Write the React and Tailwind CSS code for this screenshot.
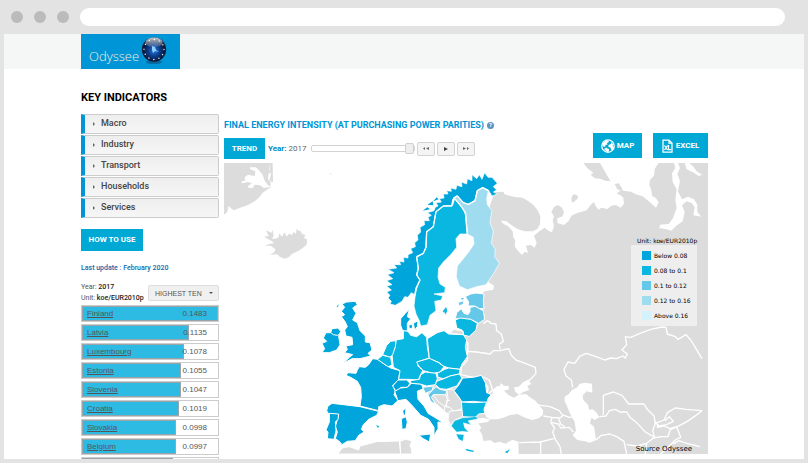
const menu = ["Macro", "Industry", "Transport", "Households", "Services"];

const ranking = [
  { name: "Finland", value: "0.1483", bar: 100 },
  { name: "Latvia", value: "0.1135", bar: 79 },
  { name: "Luxembourg", value: "0.1078", bar: 75 },
  { name: "Estonia", value: "0.1055", bar: 73 },
  { name: "Slovenia", value: "0.1047", bar: 73 },
  { name: "Croatia", value: "0.1019", bar: 71 },
  { name: "Slovakia", value: "0.0998", bar: 69 },
  { name: "Belgium", value: "0.0997", bar: 69 },
  { name: "", value: "", bar: 67 },
];

const legend = [
  { label: "Below 0.08", color: "bg-[#00a6db]" },
  { label: "0.08 to 0.1", color: "bg-[#0ab7e0]" },
  { label: "0.1 to 0.12", color: "bg-[#66c8e8]" },
  { label: "0.12 to 0.16", color: "bg-[#9fdcef]" },
  { label: "Above 0.16", color: "bg-[#d3f2fc]" },
];

const Logo = () => (
  <a
    href="#home"
    className="flex h-[35px] w-[99px] items-center bg-[#0095d6] pl-2"
  >
    <span className="mt-2 font-['Open_Sans',sans-serif] text-[13px] leading-4 font-light text-[#f1ecdc]">
      Odyssee
    </span>
    <svg viewBox="0 0 28 32" className="mb-1 ml-px h-8 w-7" aria-hidden="true">
      <defs>
        <radialGradient id="globe" cx="50%" cy="55%" r="52%">
          <stop offset="0" stopColor="#2a7be0" />
          <stop offset="0.45" stopColor="#0b3c8c" />
          <stop offset="0.85" stopColor="#081838" />
          <stop offset="1" stopColor="#26304a" />
        </radialGradient>
        <linearGradient id="shine" x1="0" y1="0" x2="0" y2="1">
          <stop offset="0" stopColor="#fff" stopOpacity="0.75" />
          <stop offset="1" stopColor="#fff" stopOpacity="0.1" />
        </linearGradient>
      </defs>
      <ellipse cx="14" cy="28" rx="8" ry="2" fill="#04699f" />
      <circle cx="14" cy="15.500" r="12.200" fill="url(#globe)" />
      <ellipse cx="14" cy="8.500" rx="8.500" ry="5" fill="url(#shine)" />
      <path d="M12 12l3 1 1 3 3 2-4-1-2 2-1-3z" fill="#8fd0ff" />
      <circle
        cx="14"
        cy="15.500"
        r="10"
        fill="none"
        stroke="#fff"
        strokeWidth="1.300"
        strokeLinecap="round"
        strokeDasharray="0.1 5.130"
      />
    </svg>
  </a>
);

const GlobeIcon = () => (
  <svg viewBox="0 0 28 28" className="size-[14px]" aria-hidden="true">
    <circle cx="14" cy="14" r="12.500" fill="#00a8d6" stroke="#fff" strokeWidth="2.500" />
    <path
      d="M3 9l6-5 5-1 2 3-4 2 1 3-4 1-1 4-5-2zM15 12l5-2 0-4 5 5-2 3 3 2-3 6-3-1-1-4-4-1zM6 20l4-3 3 2 3 1 0 5-4 1z"
      fill="#fff"
    />
  </svg>
);

const ExcelIcon = () => (
  <svg viewBox="0 0 22 28" className="h-[14px] w-[11px]" aria-hidden="true">
    <path
      d="M2 2h12l6 6v18H2zM14 2v6h6"
      fill="none"
      stroke="#fff"
      strokeWidth="2.500"
    />
    <path
      d="M5 13l6 9M11 13l-6 9M13 12v9h5"
      fill="none"
      stroke="#fff"
      strokeWidth="2.500"
    />
  </svg>
);

const EuropeMap = () => (
  <svg
    viewBox="0 0 1452 873"
    className="block h-auto w-full"
    role="img"
    aria-label="Final energy intensity by country"
  >
    {/* Greenland and Iceland */}
    <g transform="translate(-12 -9)" fill="#dcdcdc">
      <path d="M12 9H148L147 28 152 40 150 64 159 66 158 9 148 9 152 82 140 90 128 98 118 112 104 124 84 135 60 143 42 151 34 146 26 137 22 156 12 164Z" />
      <path
        d="M90 22L108 22 118 32 128 44 134 62 144 76 154 80 132 84 120 76 104 74 98 84 86 84 84 78 96 70 84 66 66 70 64 64 76 62 74 52 84 44 104 48 106 34 90 28ZM146 40L152 42 148 64 144 56Z"
        fill="#fff"
      />
      <path d="M132 230L146 228 138 211 154 218 158 210 161 228 156 236 166 236 176 232 178 220 186 230 194 217 200 230 208 220 214 226 222 216 228 222 230 206 238 214 242 212 246 222 256 224 252 234 261 238 260 254 248 264 236 272 216 282 206 292 194 296 180 291 172 283 150 284 163 276 166 267 152 257 134 258 150 251 162 250 156 244Z" />
      <circle cx="332" cy="42" r="2" />
    </g>

    {/* Mainland, Russia and the Middle East */}
    <path
      d="M812 88L838 86 842 94 856 98 872 102 896 104 912 114 926 124 940 140 949 160 948 184 940 198 926 205 902 205 880 198 862 186 846 174 830 173 838 182 852 190 866 204 868 224 874 232 872 250 880 262 894 276 902 266 912 270 906 248 920 246 932 254 938 240 930 218 944 206 962 194 974 204 984 208 990 190 986 172 990 160 982 146 990 132 1002 126 1014 134 1020 148 1016 160 1000 166 1000 180 1020 186 1034 174 1042 158 1060 150 1088 142 1098 128 1110 116 1114 128 1124 140 1132 134 1150 138 1162 128 1176 126 1190 134 1200 122 1198 104 1188 96 1178 92 1190 82 1220 86 1236 94 1256 100 1276 116 1296 134 1304 118 1296 106 1284 98 1282 82 1276 66 1278 50 1290 38 1292 18 1304 0H1452V873H884L883 836 866 830 854 836 846 842 826 836 812 840 800 832 778 834 774 814 766 802 772 794 760 778 790 772 756 764 762 752 740 756 690 790 674 778 674 756 658 740 626 712 612 690 616 674 640 640 700 600 700 530 676 512 690 500 712 502 760 490 780 430 776 392 788 364 800 250 790 150Z"
      fill="#dcdcdc"
    />
    <path d="M784 366L792 356 810 368 808 380 786 384 770 390 736 388 744 376Z" fill="#fff" />
    <g transform="translate(948 -9)" fill="#dcdcdc">
      <path d="M130 9H180L192 30 206 54 212 64 196 62 180 56 164 55 152 44 160 38 144 26Z" />
      <path d="M224 72L236 70 246 84 248 94 232 88Z" />
      <path d="M94 114L100 103 112 106 114 114 104 124 96 128Z" />
      <path
        d="M402 9L406 24 396 40 398 66 410 88 406 120 410 144 398 176 386 192 360 194 358 204 380 208 394 212 408 198 428 184 434 156 426 136 440 124 456 130 464 142 460 166 484 170 472 156 472 134 462 118 444 110 426 118 414 94 420 62 412 42 420 24 414 9ZM434 9L440 28 462 38 476 48 486 44 470 34 460 20 448 9Z"
        fill="#fff"
      />
    </g>

    {/* Inland seas and borders in the east */}
    <g transform="translate(648 351)">
      <g fill="#fff">
        <path d="M134 384L144 366 148 350 158 342 158 330 172 318 180 318 182 309 192 317 206 318 207 328 192 332 206 346 222 353 236 344 258 342 270 352 286 362 298 376 310 392 308 405 296 415 276 420 252 412 232 402 210 405 190 413 172 418 150 418 140 412 133 400Z" />
        <path d="M222 322L236 320 250 306 276 294 268 304 274 312 262 318 268 330 250 336 238 344 226 336Z" />
        <path d="M396 330L412 322 418 312 434 308 456 311 457 338 440 334 428 346 430 360 444 374 448 390 458 388 470 398 478 412 464 420 454 414 450 430 462 440 465 458 468 480 450 488 434 484 412 480 398 466 408 452 404 426 396 412 388 396 382 380 374 364 374 350 386 342Z" />
        <path d="M110 416L130 414 150 418 144 426 118 430 106 436Z" />
      </g>
      <g fill="none" stroke="#fff" strokeWidth="4" strokeLinejoin="round">
        <path d="M130 130L142 122 154 130 168 132 170 152 184 162 190 184 178 192 180 208" />
        <path d="M80 214L110 216 150 222 160 212 180 212 206 206 214 226 228 240 250 248 286 262 288 280 272 298" />
        <path d="M76 178L84 190 82 240 64 262 62 284 100 292 122 288 148 300 158 330 148 340M122 288L132 304 144 322 142 340" />
        <path d="M286 374L330 380 358 392 366 404 388 412 400 410M310 408L336 412 360 414 370 406M336 412L332 428 344 444 338 456 346 478 360 500 364 522M336 428L356 432 362 444 388 442 400 456M356 416L362 432 374 440" />
        <path d="M236 488L300 486 342 476M302 486L302 522" />
        <path d="M398 322L394 300 378 288 372 268 384 246 404 250 420 228 440 220 474 232 494 240 512 234 530 236 548 228 556 234 562 222 546 210 560 194 556 170 572 172 600 160 632 148 666 141 678 142 682 162 706 170 714 178 738 164 752 180 768 206 786 236" />
        <path d="M478 410L498 408 508 392 526 388 540 396 560 396 570 412 590 428 616 456 640 470M490 404V346L520 336 546 346 566 372 612 372 622 388 642 408 646 430 672 420 682 398 706 384 738 388 786 392" />
        <path d="M468 480L484 466 510 462 530 470 552 484 560 522M616 522L620 490 640 474 664 470 684 470 690 450 712 440 742 424 768 406 786 392M644 424L656 438 680 434 700 424 688 410 674 422M646 430L638 452 644 474M654 432L652 442 672 438 690 446 710 440 722 472 706 480 690 496 662 522M700 492L716 482 740 490 780 500" />
        <path d="M560 494L590 498 620 490" />
      </g>
    </g>

    {/* Nordic and Baltic countries */}
    <g transform="translate(468 -9)" stroke="#fff" strokeWidth="2" strokeLinejoin="round">
      <path
        d="M30 432L34 424 24 414 30 406 20 396 34 390 20 378 36 374 20 362 38 356 22 344 42 338 24 328 50 324 42 314 62 314 58 304 72 306 70 292 84 294 84 284 98 278 92 266 106 260 104 248 114 240 112 226 122 216 120 202 134 194 132 182 148 182 144 172 154 166 142 158 162 152 166 142 174 138 168 128 184 126 178 116 192 114 190 102 204 102 200 92 214 94 212 84 228 88 230 76 246 80 244 66 260 72 262 56 276 62 276 44 290 56 298 44 306 58 314 38 324 52 336 52 352 70 340 80 350 90 340 96 352 102 336 108 325 90 308 83 292 92 285 122 265 133 250 128 230 108 218 118 215 138 190 138 168 155 160 200 140 215 138 262 130 280 110 290 115 325 110 345 120 360 108 385 104 404 94 398 84 412 74 410 66 424 46 436Z"
        fill="#00a6db"
      />
      <path
        d="M218 136L224 116 244 140 256 158 262 222 240 222 228 236 230 262 212 284 190 306 176 324 174 352 180 372 196 382 194 398 162 402 188 408 184 420 164 424 168 452 150 466 142 494 122 498 118 482 108 462 102 438 106 404 110 386 120 360 110 345 115 325 110 292 130 280 138 262 140 215 160 200 168 155 190 138Z"
        fill="#0ab7e0"
      />
      <path
        d="M222 113L232 108 250 128 265 133 285 122 292 92 308 83 325 92 320 116 322 134 336 152 330 188 340 214 334 250 346 268 344 290 358 310 340 342 318 374 290 380 262 389 238 378 229 350 232 318 250 296 266 276 282 252 280 232 262 222 258 165 248 145Z"
        fill="#9fdcef"
      />
      <path
        d="M110 290L115 325 110 345 120 360 108 385 104 408M110 290L130 280 138 262 140 215 160 200 168 155 190 138 215 138 222 113 244 140 256 158 262 222M224 112L232 108 250 128 265 133 285 122 292 92 308 83 325 92"
        fill="none"
        strokeWidth="4"
      />
      <path d="M128 152L142 142 150 148ZM142 134L158 124 160 136ZM160 124L170 112 176 118Z" fill="#00a6db" stroke="none" />
      <path d="M192 452L198 440 202 452 196 464Z" fill="#0ab7e0" stroke="none" />
    </g>
    <g transform="translate(648 351)" stroke="#fff" strokeWidth="3" strokeLinejoin="round">
      <path d="M76 50L92 42 108 39 132 42 130 62 132 86 118 86 104 78 84 78 86 66Z" fill="#66c8e8" />
      <path d="M56 68L70 64 68 72 58 76ZM62 54L72 54 68 60Z" fill="#66c8e8" stroke="none" />
      <path d="M46 116L50 98 64 86 72 100 84 104 90 94 90 82 106 79 118 86 130 92 134 118 116 130 92 118Z" fill="#66c8e8" />
      <path d="M46 120L60 114 92 118 112 130 108 150 88 169 72 166 66 150 50 144Z" fill="#0ab7e0" />
    </g>

    {/* Western, central and southern Europe */}
    <g transform="translate(258 411)" stroke="#fff" strokeWidth="3" strokeLinejoin="round">
      <g fill="#dcdcdc">
        <path d="M84 462L96 444 118 440 146 450 150 438 200 425 268 423 272 462Z" />
        <path d="M272 462L270 424 286 418 306 422 300 436 304 446 306 462Z" />
        <path d="M368 284L406 282 412 298 406 320 386 306Z" />
        <path d="M410 268L432 270 440 286 454 300 456 326 432 334 418 322 408 318 414 296Z" />
        <path d="M404 320L420 322 430 334 418 344 402 334Z" />
        <path d="M418 334L456 330 460 348 432 362 422 376 414 360Z" />
      </g>
      <g fill="#00a6db">
        <path d="M94 50L104 44 94 34 104 22 96 12 110 6 136 4 142 14 128 24 138 40 128 60 142 68 150 92 166 108 166 126 180 128 186 150 174 160 182 168 150 176 126 176 100 190 118 172 128 164 104 158 112 148 108 138 128 134 126 112 108 108 104 90 112 80 106 66Z" />
        <path d="M36 158L44 146 36 130 50 124 40 114 48 98 62 98 66 86 84 84 92 94 86 108 90 134 80 150 58 158Z" />
        <path d="M188 176L204 178 222 192 242 204 270 212 266 238 248 256 256 274 252 284 264 302 246 318 222 314 206 320 206 332 150 318 154 290 152 262 142 244 122 232 108 226 114 218 138 220 142 210 148 200 166 202 176 194Z" />
        <path d="M50 332L54 318 66 310 100 314 150 320 206 334 200 346 176 358 160 374 154 388 162 396 146 406 136 422 112 424 96 434 88 424 76 416 82 396 76 380 86 344 56 342Z" />
        <path d="M58 340L86 342 84 358 76 366 78 392 72 418 52 416 54 396 48 390 58 366Z" />
        <path d="M248 258L264 240 290 240 300 250 292 262 274 262 258 274Z" />
        <path d="M254 274L272 264 292 262 304 250 334 252 340 266 322 274 324 298 342 318 354 340 374 352 400 368 384 366 384 386 372 408 372 382 356 358 332 346 304 314 288 298 264 302Z" />
        <path d="M326 406L362 402 358 426 340 416ZM274 356L288 350 292 366 288 386 276 388ZM278 332L288 324 286 346 280 344Z" />
        <path d="M432 272L446 256 458 234 490 232 514 226 526 248 530 278 544 284 536 292 530 308 490 304 456 306 446 290Z" />
        <path d="M272 56L286 40 298 28 292 50 302 56 292 70 292 94 278 92 272 76Z" />
        <path d="M296 76L306 72 308 84 298 86ZM310 70L324 62 322 80 314 90Z" />
      </g>
      <g fill="#0ab7e0">
        <path d="M280 92L294 94 302 106 320 110 336 98 350 112 352 140 358 174 322 186 324 198 338 212 328 232 326 240 296 238 266 238 270 212 250 202 246 164 256 140 258 120 280 116Z" />
        <path d="M352 116L382 98 402 92 416 102 460 104 470 120 466 142 472 170 456 192 450 208 416 204 400 198 388 188 358 176Z" />
        <path d="M218 164L230 136 242 124 258 122 256 140 248 164 240 172Z" />
        <path d="M202 178L218 166 242 172 246 196 234 200Z" />
        <path d="M320 186L358 175 386 188 402 200 390 216 370 220 340 212 326 198Z" />
        <path d="M300 242L328 238 332 224 346 216 378 220 382 236 376 254 350 258 330 252 304 250Z" />
        <path d="M382 220L404 208 416 204 450 208 448 222 420 228 400 236 384 232Z" />
        <path d="M380 244L402 236 420 228 448 222 456 234 440 258 410 268 390 266 376 254Z" />
        <path d="M454 306L490 308 530 306 522 328 524 340 506 342 496 352 458 350 456 328Z" />
        <path
          d="M424 378L434 362 458 354 498 350 504 356 474 362 482 374 460 368 464 384 476 396 458 394 440 396ZM438 402L462 404 458 424 446 418Z"
          strokeWidth="1"
        />
        <path d="M466 446L492 452 490 456 470 452ZM584 456L600 448 592 460Z" stroke="none" />
      </g>
      <g fill="#66c8e8">
        <path d="M338 262L370 258 366 272 346 280Z" />
        <path d="M366 272L378 260 390 268 410 272 408 284 370 284 364 292 378 314 362 304 354 284Z" />
      </g>
      <path d="M198 376L208 378 204 384ZM398 34L406 24 402 38ZM80 20L86 12 84 22Z" fill="#0ab7e0" stroke="none" />
      <path d="M62 98L70 104 82 106 92 100M408 304L420 300" fill="none" />
      <path d="M420 100L432 88 460 94 460 104Z" fill="#dcdcdc" />
    </g>
  </svg>
);

const Legend = () => (
  <div className="absolute top-[73px] right-[11px] w-[66px] font-['DejaVu_Sans',sans-serif] text-[6px] text-black">
    <p className="pl-[6px] leading-[9px] whitespace-nowrap">
      Unit: koe/EUR2010p
    </p>
    <ul className="bg-[#eeeeee] py-[3px] pl-[11px]">
      {legend.map((item) => (
        <li key={item.label} className="flex h-[15px] items-center gap-[3px] whitespace-nowrap">
          <span className={`size-[9px] shrink-0 ${item.color}`} />
          {item.label}
        </li>
      ))}
    </ul>
  </div>
);

const Sidebar = () => (
  <aside className="w-[138px] shrink-0">
    <h1 className="text-[11px] leading-4 font-bold text-black">
      KEY INDICATORS
    </h1>
    <nav className="mt-2 flex flex-col gap-px">
      {menu.map((label) => (
        <button
          key={label}
          type="button"
          className="flex h-5 items-center gap-[6px] rounded-r-[2px] border border-l-4 border-[#cccccc] border-l-[#0095d6] bg-gradient-to-b from-[#eeeeee] to-[#f6f6f6] pl-2 text-[9px] font-medium text-[#444444]"
        >
          <span className="border-y-2 border-l-2 border-y-transparent border-l-[#666666]" />
          {label}
        </button>
      ))}
    </nav>
    <button
      type="button"
      className="mt-[11px] block h-[22px] w-[62px] bg-[#00a8d6] text-[8px] font-bold text-white"
    >
      HOW TO USE
    </button>
    <p className="mt-[11px] text-[7px] leading-3 font-medium text-[#1468a8]">
      Last update : February 2020
    </p>
    <div className="mt-2 flex items-center justify-between text-[7px] leading-[11px] text-[#555555]">
      <p className="whitespace-nowrap">
        Year: <b className="font-medium text-[#222222]">2017</b>
        <br />
        Unit: <b className="font-medium text-[#222222]">koe/EUR2010p</b>
      </p>
      <div className="relative">
        <select
          aria-label="Ranking"
          className="block h-4 w-[71px] appearance-none rounded-[2px] border border-[#dddddd] bg-[#f0f0f0] pl-[6px] font-['Liberation_Sans',sans-serif] text-[7px] text-[#555555]"
        >
          <option>HIGHEST TEN</option>
        </select>
        <span className="pointer-events-none absolute top-[7px] right-[6px] border-x-2 border-t-2 border-x-transparent border-t-[#555555]" />
      </div>
    </div>
    <ul className="mt-px flex flex-col gap-[2px] font-['Liberation_Sans',sans-serif] text-[8px] text-[#555555]">
      {ranking.map((row) => (
        <li
          key={row.bar + row.name}
          className="relative h-[17px] border border-[#cccccc]"
        >
          <div
            className="h-full border border-[#9aa5ab] bg-[#2ebbe3]"
            style={{ width: `${row.bar}%` }}
          />
          <div className="absolute inset-0 flex items-center justify-between pr-[11px] pl-[5px]">
            <a href="#country" className="underline">
              {row.name}
            </a>
            <span>{row.value}</span>
          </div>
        </li>
      ))}
    </ul>
  </aside>
);

const playerButton =
  "flex h-[14px] w-[18px] items-center justify-center rounded-[2px] border border-[#d3d3d3] bg-[#f4f4f4]";

const Player = () => (
  <div className="flex h-[21px] items-center">
    <button
      type="button"
      className="h-[21px] w-[41px] bg-[#00a8d6] text-[8px] font-bold text-white"
    >
      TREND
    </button>
    <label htmlFor="year" className="ml-[3px] text-[8px] whitespace-nowrap text-[#666666]">
      <b className="text-[#0088c2]">Year:</b> 2017
    </label>
    <input
      id="year"
      type="range"
      min="2000"
      max="2017"
      defaultValue="2017"
      className="ml-[5px] h-[7px] w-[104px] appearance-none rounded-[2px] border border-[#d3d3d3] bg-white [&::-webkit-slider-thumb]:h-[11px] [&::-webkit-slider-thumb]:w-[9px] [&::-webkit-slider-thumb]:appearance-none [&::-webkit-slider-thumb]:rounded-[2px] [&::-webkit-slider-thumb]:border [&::-webkit-slider-thumb]:border-[#d0d0d0] [&::-webkit-slider-thumb]:bg-[#eeeeee]"
    />
    <div className="ml-[2px] flex gap-[2px]">
      <button type="button" aria-label="Slower" className={playerButton}>
        <svg viewBox="0 0 6 3" className="h-[3px] w-[6px]" fill="#666">
          <path d="M0 1.500L2 0V3ZM3 1.500L6 0V3Z" />
        </svg>
      </button>
      <button type="button" aria-label="Play" className={playerButton}>
        <svg viewBox="0 0 4 4" className="size-1" fill="#444">
          <path d="M0 0L4 2 0 4Z" />
        </svg>
      </button>
      <button type="button" aria-label="Faster" className={playerButton}>
        <svg viewBox="0 0 6 3" className="h-[3px] w-[6px]" fill="#666">
          <path d="M0 0L3 1.500 0 3ZM4 0L6 1.500 4 3Z" />
        </svg>
      </button>
    </div>
  </div>
);

export default function App() {
  return (
    <div className="flex h-screen flex-col overflow-hidden bg-[#e3e3e3] px-1 pb-1 font-[Roboto,sans-serif]">
      {/* Browser bar */}
      <div className="flex h-[34px] shrink-0 items-center gap-[11px] pr-[19px] pl-[7px]">
        <span className="size-3 rounded-full bg-[#bbbbbb]" />
        <span className="size-3 rounded-full bg-[#bbbbbb]" />
        <span className="size-3 rounded-full bg-[#bbbbbb]" />
        <input
          aria-label="Address"
          className="h-[18px] min-w-0 flex-1 rounded-full bg-white px-3 text-[9px]"
        />
      </div>

      <div className="min-h-0 flex-1 overflow-hidden bg-white">
        <header className="bg-[#f5f7f6] pl-[77px]">
          <Logo />
        </header>

        <main className="flex gap-[5px] pt-[21px] pr-24 pl-[77px]">
          <Sidebar />

          <section className="min-w-0 flex-1 pt-7">
            <div className="flex items-end justify-between">
              <div>
                <h2 className="mb-[6px] flex items-center gap-[3px] text-[9px] leading-[14px] font-bold whitespace-nowrap text-[#0095d6]">
                  FINAL ENERGY INTENSITY (AT PURCHASING POWER PARITIES)
                  <span className="flex size-[7px] items-center justify-center rounded-full bg-[#5b93c4] text-[6px] leading-none text-white">
                    ?
                  </span>
                </h2>
                <Player />
              </div>
              <div className="mb-px flex gap-[11px] text-[8px] font-bold text-white">
                <button
                  type="button"
                  className="flex h-[25px] w-[49px] items-center justify-center gap-[2px] bg-[#00a8d6]"
                >
                  <GlobeIcon />
                  MAP
                </button>
                <button
                  type="button"
                  className="flex h-[25px] w-[55px] items-center justify-center gap-[3px] bg-[#00a8d6]"
                >
                  <ExcelIcon />
                  EXCEL
                </button>
              </div>
            </div>

            <div className="relative mt-1">
              <EuropeMap />
              <Legend />
              <p className="absolute right-[16px] bottom-0 font-['DejaVu_Sans',sans-serif] text-[7px] leading-[9px] text-black">
                Source Odyssee
              </p>
            </div>
          </section>
        </main>
      </div>
    </div>
  );
}
